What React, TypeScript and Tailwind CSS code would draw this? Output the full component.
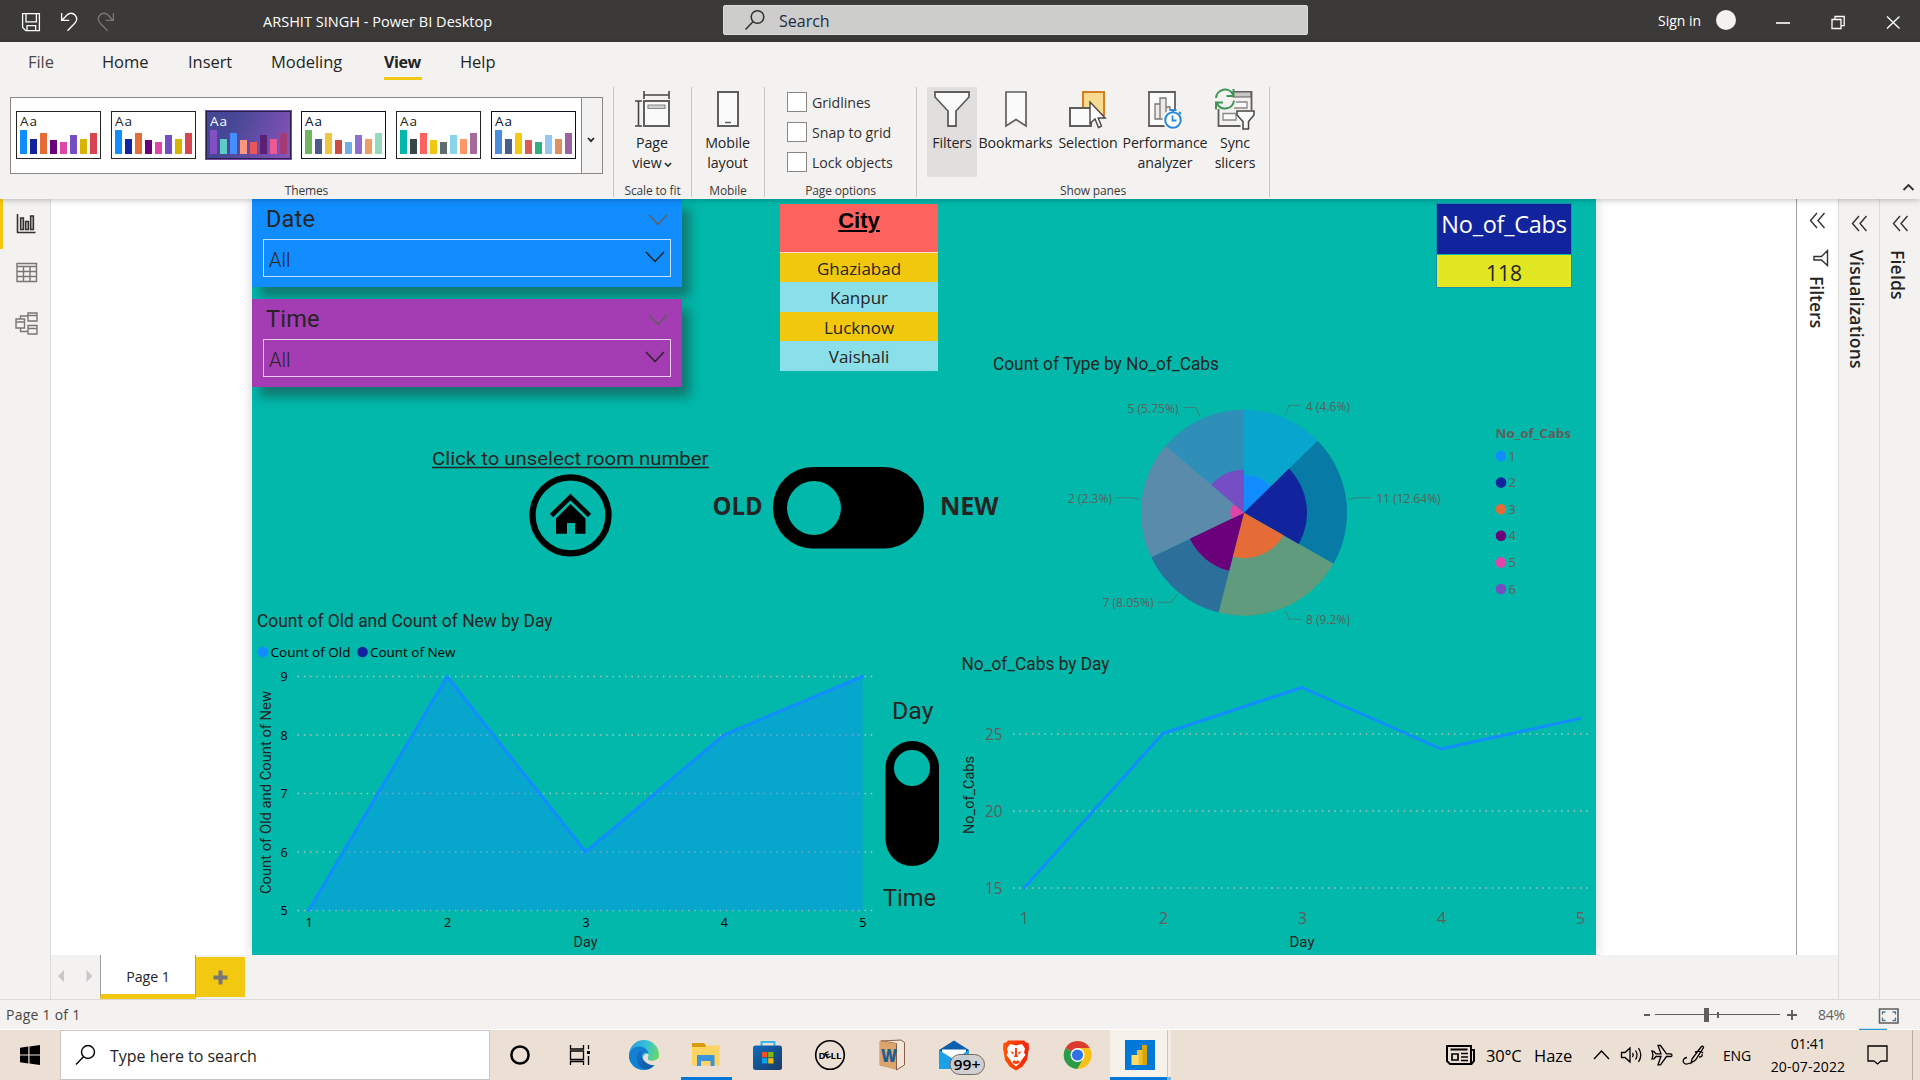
import React from "react";

type P = { children?: React.ReactNode };

/* ---------- shared data ---------- */

const themes: { colors: string[]; dark?: boolean; border: string; ink: string }[] = [
  { colors: ["#118dff", "#12239e", "#e66c37", "#6b007b", "#e044a7", "#744ec2", "#d9b300", "#d64550"], border: "border-[#252423]", ink: "text-[#252423]" },
  { colors: ["#118dff", "#12239e", "#e66c37", "#6b007b", "#e044a7", "#744ec2", "#d9b300", "#d64550"], border: "border-[#252423]", ink: "text-[#252423]" },
  { colors: ["#8250c4", "#5ecbc8", "#438fff", "#ff977e", "#eb5757", "#5b2071", "#ec5a96", "#a43b76"], dark: true, border: "border-[#252440]", ink: "text-white" },
  { colors: ["#70b55f", "#4b5a8a", "#eec643", "#cd4c46", "#71afe2", "#8d6fd1", "#ee9e64", "#95dabb"], border: "border-[#0a1128]", ink: "text-[#0a1128]" },
  { colors: ["#01b8aa", "#374649", "#fd625e", "#f2c80f", "#5f6b6d", "#8ad4eb", "#fe9666", "#a66999"], border: "border-[#252423]", ink: "text-[#252423]" },
  { colors: ["#4a8ddc", "#4c5d8a", "#f3c911", "#dc5b57", "#33ae81", "#95c8f0", "#dd915f", "#9a64a0"], border: "border-[#0a1128]", ink: "text-[#0a1128]" },
];
const barHeights = ["h-[24px]", "h-[15px]", "h-[21px]", "h-[14px]", "h-[12px]", "h-[19px]", "h-[15px]", "h-[21px]"];

/* ---------- title bar ---------- */

function TitleBar() {
  return (
    <header className="flex h-[42px] shrink-0 items-center bg-[#3b3a39] text-white">
      <svg width="240" height="42" fill="none" stroke="#fff" strokeWidth="1.3">
        <path d="M22.6 13.6h16.8v17H25.8l-3.2-3.2z M26 13.6v8.2h10.4v-8.2 M27 30.6v-5h8.6v5" />
        <path d="M61.6 13v7.4h7.6 M62 20.2l5-5.2c2.600-2.500 6-2.200 8 0c2.200 2.400 2 5.600 0 8l-7.500 7.800" />
        <g stroke="#797775">
          <path d="M113.400 13v7.400h-7.600 M113 20.200l-5-5.200c-2.600-2.500-6-2.200-8 0c-2.200 2.400-2 5.600 0 8l7.500 7.800" />
        </g>
      </svg>
      <div className="ml-[23px] w-[460px] pt-[2px] text-[14.500px] tracking-[0.020px]">ARSHIT SINGH - Power BI Desktop</div>
      <div className="mt-[-2px] flex h-[30px] w-[585px] items-center rounded-[2px] border border-[#dcdcda] bg-[#cdcdcb]">
        <svg className="ml-[20px]" width="22" height="22" fill="none" stroke="#323130" strokeWidth="1.500">
          <circle cx="13.500" cy="8" r="6.300" />
          <path d="M9.200 12.600L1.500 20.500" />
        </svg>
        <span className="ml-[13px] pt-[2px] text-[16px] text-[#1b2a4a]">Search</span>
      </div>
      <div className="ml-[350px] mt-[-2px] w-[58px] text-[14px]">Sign in</div>
      <div className="mt-[-2px] h-5 w-5 rounded-full bg-[#f3f2f1]" />
      <svg className="ml-[34px]" width="150" height="42" fill="none" stroke="#fff" strokeWidth="1.300">
        <path d="M6 23h14" strokeWidth="1.600" />
        <path d="M62 19.500h9v9h-9z M65 19.500v-3h9.200v9.200h-3.200" />
        <path d="M117 16.500l12.500 12 M129.500 16.500l-12.500 12" />
      </svg>
    </header>
  );
}

/* ---------- ribbon ---------- */

function Tabs() {
  const tab = "text-[16.500px] tracking-[-0.050px]";
  return (
    <nav className="flex h-[45px] items-start pt-[8px] text-[#252423]">
      <span className={`${tab} ml-[28px] w-[74px] text-[#4a4846]`}>File</span>
      <span className={`${tab} w-[86px]`}>Home</span>
      <span className={`${tab} w-[83px]`}>Insert</span>
      <span className={`${tab} w-[113px]`}>Modeling</span>
      <span className="mr-[38px] flex h-[30px] w-[38px] items-start border-b-[3px] border-[#f2c811] text-[16px] font-bold tracking-[-0.400px]">View</span>
      <span className={tab}>Help</span>
    </nav>
  );
}

function ThemeThumb({ t }: { t: (typeof themes)[number] }) {
  return (
    <div
      className={`flex h-[48px] w-[85px] flex-col border ${t.border} ${t.ink} ${
        t.dark ? "bg-linear-115 from-[#464895] from-30% to-[#8a52bd] ring-1 ring-[#7d4bb0]" : "bg-white"
      }`}
    >
      <span className="ml-[3px] h-[18px] text-[13.500px] leading-[18px] tracking-[1px]">Aa</span>
      <div className="ml-[3px] flex h-[24px] items-end gap-[3px]">
        {t.colors.map((c, i) => (
          <i key={i} className={`w-[7px] ${barHeights[i]}`} style={{ backgroundColor: c }} />
        ))}
      </div>
    </div>
  );
}

function Group({ label, cls, children }: P & { label: string; cls: string }) {
  return (
    <section className={`flex h-[110px] flex-col border-r border-[#c8c6c4] ${cls}`}>
      <div className="flex h-[94px] w-full">{children}</div>
      <div className="flex h-[16px] w-full items-center justify-center pt-[4px] text-[12px] leading-none tracking-[-0.150px] text-[#3b3a39]">{label}</div>
    </section>
  );
}

function Tool({ icon, lines, cls, chevron }: { icon: React.ReactNode; lines: string[]; cls: string; chevron?: boolean }) {
  return (
    <div className={`flex h-[90px] shrink-0 flex-col items-center text-[14.200px] leading-[20px] tracking-[-0.080px] text-[#252423] ${cls}`}>
      <div className="h-[46px]">{icon}</div>
      {lines.map((l, i) => (
        <span key={l} className="flex items-center whitespace-nowrap">
          {l}
          {chevron && i === 1 && (
            <svg className="ml-[2px] mt-[3px]" width="8" height="6" fill="none" stroke="#252423" strokeWidth="1.600">
              <path d="M1 1l3 3.200l3-3.200" />
            </svg>
          )}
        </span>
      ))}
    </div>
  );
}

const ico = { fill: "#fafafa", stroke: "#605e5c", strokeWidth: 2 };

const PageViewIcon = (
  <svg width="38" height="45" {...ico}>
    <path d="M11 4v8 M36 4v8 M11 8h25 M2 14h7 M2 39h7 M5.500 14v25" fill="none" stroke="#484644" strokeWidth="1.600" />
    <path d="M11 14h25v25h-25z" />
    <path d="M15 18h17v3.500h-17z" fill="#d2d0ce" strokeWidth="1.200" stroke="#8a8886" />
  </svg>
);
const MobileIcon = (
  <svg width="24" height="45" {...ico}>
    <path d="M2 5h20v34h-20z" />
    <path d="M9 35.500h6" strokeWidth="1.500" />
  </svg>
);
const FilterIcon = (
  <svg width="38" height="45" {...ico}>
    <path d="M2 5h34v5l-13 14v15h-8v-15l-13-14z" strokeWidth="1.800" />
  </svg>
);
const BookmarkIcon = (
  <svg width="24" height="45" {...ico}>
    <path d="M2 5h20v34l-10-6.500l-10 6.500z" strokeWidth="1.700" />
  </svg>
);
const SelectionIcon = (
  <svg width="40" height="45">
    <path d="M15 5h21v23h-21z" fill="#f8db8f" stroke="#d67f1f" strokeWidth="2" />
    <path d="M2 21h21v18h-21z" {...ico} />
    <path d="M22 15v21.500l5-4.500l3.500 8.500l3-1.300l-3.300-8.200h7z" fill="#fff" stroke="#484644" strokeWidth="1.400" />
  </svg>
);
const PerformanceIcon = (
  <svg width="38" height="45" {...ico}>
    <path d="M3 5h26v34h-26z" strokeWidth="1.800" />
    <path d="M9 17h5v15h-5z M14 11h6v21h-6z M20 20h4v12h-4z" strokeWidth="1.300" fill="#edebe9" stroke="#797775" />
    <circle cx="27" cy="33" r="10.500" fill="#fafafa" stroke="none" />
    <circle cx="27" cy="33" r="7.800" fill="#fff" stroke="#2b88d8" />
    <path d="M23.500 23h7 M27 23v3 M33 25l2 2 M26.500 28.500v5h4" stroke="#2b88d8" strokeWidth="1.800" fill="none" />
  </svg>
);
const SyncIcon = (
  <svg width="42" height="45" {...ico}>
    <path d="M4.500 22v17h22 M20 5h17.500v18" strokeWidth="1.800" fill="none" />
    <path d="M19 5h18v5h-18z" fill="#c8c6c4" strokeWidth="1.200" />
    <path d="M22 15h11v6h-13 M9 26.500h13v6.500h-13z" strokeWidth="1.300" stroke="#8a8886" />
    <path d="M23 24h17v4l-5.500 6.500v7.500h-5.500v-7.500l-6-6.500z" strokeWidth="1.500" stroke="#484644" />
    <path d="M2 11a9 9 0 0 1 17-3.500 M19.500 2v7h-7 M20 13.500a9 9 0 0 1-17 3 M2 22.500v-7h7" fill="none" stroke="#3f9454" />
  </svg>
);

function Ribbon() {
  return (
    <div className="flex h-[112px]">
      <Group label="Themes" cls="w-[614px]">
        <div className="ml-[10px] mt-[10px] flex h-[77px] w-[593px] border border-[#8a8886] bg-white">
          <div className="flex w-[570px] shrink-0 items-start gap-[10px] pl-[5px] pt-[13px]">
            {themes.map((t, i) => (
              <ThemeThumb key={i} t={t} />
            ))}
          </div>
          <div className="flex w-[21px] shrink-0 items-center justify-center border-l border-[#8a8886] bg-[#f3f2f1] pr-[2px] pt-[8px]">
            <svg width="8" height="6" fill="none" stroke="#252423" strokeWidth="1.700">
              <path d="M1 1l3 3.200l3-3.200" />
            </svg>
          </div>
        </div>
      </Group>
      <Group label="Scale to fit" cls="w-[78px]">
        <Tool icon={PageViewIcon} lines={["Page", "view"]} chevron cls="w-[76px]" />
      </Group>
      <Group label="Mobile" cls="w-[73px]">
        <Tool icon={MobileIcon} lines={["Mobile", "layout"]} cls="w-[71px]" />
      </Group>
      <Group label="Page options" cls="w-[152px]">
        <div className="ml-[22px] mt-[5px] flex flex-col gap-[10px]">
          {["Gridlines", "Snap to grid", "Lock objects"].map((s) => (
            <label key={s} className="flex h-5 items-center gap-[5px] text-[14.200px] leading-none tracking-[-0.050px] text-[#323130]">
              <i className="h-5 w-5 border border-[#8a8886] bg-white" />
              <span className="pt-[2px]">{s}</span>
            </label>
          ))}
        </div>
      </Group>
      <Group label="Show panes" cls="w-[353px]">
        <Tool icon={FilterIcon} lines={["Filters"]} cls="ml-[10px] w-[50px] bg-[#e1dfdd]" />
        <Tool icon={BookmarkIcon} lines={["Bookmarks"]} cls="w-[77px]" />
        <Tool icon={SelectionIcon} lines={["Selection"]} cls="ml-[2px] w-[64px]" />
        <Tool icon={PerformanceIcon} lines={["Performance", "analyzer"]} cls="ml-[2px] w-[86px]" />
        <Tool icon={SyncIcon} lines={["Sync", "slicers"]} cls="ml-[4px] w-[46px]" />
      </Group>
      <div className="flex flex-1 items-end justify-end pb-[7px] pr-[5px]">
        <svg width="13" height="9" fill="none" stroke="#323130" strokeWidth="1.900">
          <path d="M1.500 7l5-5l5 5" />
        </svg>
      </div>
    </div>
  );
}

/* ---------- side rails ---------- */

function LeftRail() {
  return (
    <aside className="h-full w-[51px] shrink-0 border-r border-[#dcdad8] bg-[#f3f2f1]">
      <div className="h-[50px] border-l-[3px] border-[#f2c811] pl-[13px] pt-[14px]">
        <svg width="22" height="22" fill="#a19f9d" stroke="#323130" strokeWidth="1.300">
          <path d="M1.500 1v18.500h18" fill="none" strokeWidth="1.600" />
          <path d="M4.500 5h3v11.500h-3z M9.500 8.500h3v8h-3z M14.500 3h3v13.500h-3z" />
        </svg>
      </div>
      <div className="h-[50px] pl-[16px] pt-[13px]">
        <svg width="22" height="22" fill="none" stroke="#797775" strokeWidth="1.400">
          <path d="M1 1.500h19.500v18h-19.500z M1 4.500h19.500 M1 9.500h19.500 M1 14.500h19.500 M7.500 4.500v15 M14 4.500v15" />
        </svg>
      </div>
      <div className="h-[50px] pl-[15px] pt-[13px]">
        <svg width="24" height="24" fill="none" stroke="#797775" strokeWidth="1.400">
          <path d="M13 1h9v8h-9z M13 3.500h9 M1 7h8.500v9h-8.500z M1 10h8.500 M13 13.500h9v8.500h-9z M13 16.500h9 M5.500 7v-3h7.500 M5.500 16v3.500h7.500" />
        </svg>
      </div>
    </aside>
  );
}

const Chevrons = () => (
  <svg className="shrink-0" width="17" height="17" fill="none" stroke="#323130" strokeWidth="1.400">
    <path d="M8 1l-6.500 7.500l6.500 7.500 M15.500 1l-6.500 7.500l6.500 7.500" />
  </svg>
);
const vert = "[writing-mode:vertical-rl] text-[17.500px] leading-[20px] font-semibold text-[#252423]";

function RightPanes() {
  return (
    <>
      <aside className="flex h-[756px] w-[42px] flex-col items-center border-l border-[#a19f9d] bg-white pt-[13px]">
        <Chevrons />
        <svg className="ml-[5px] mt-[20px] shrink-0" width="17" height="18" fill="none" stroke="#323130" strokeWidth="1.400">
          <path d="M15.500 1.500v15l-6-5.500h-7.500v-3.500h7.500z" />
        </svg>
        <span className={`${vert} mt-[9px] mr-[2px]`}>Filters</span>
      </aside>
      <aside className="flex h-[800px] w-[41px] flex-col items-center border-l border-[#dcdad8] bg-[#f3f2f1] pt-[16px]">
        <Chevrons />
        <span className={`${vert} mt-[18px] mr-[5px] tracking-[0.200px]`}>Visualizations</span>
      </aside>
      <aside className="flex h-[800px] w-[41px] flex-col items-center border-l border-[#dcdad8] bg-[#f3f2f1] pt-[16px]">
        <Chevrons />
        <span className={`${vert} mt-[18px] mr-[5px] tracking-[0.200px]`}>Fields</span>
      </aside>
    </>
  );
}

/* ---------- report visuals ---------- */

const din = "font-['Roboto','Open_Sans',sans-serif]";

function Slicer({ title, cls }: { title: string; cls: string }) {
  return (
    <div className={`absolute left-0 h-[88px] w-[430px] shadow-[8px_10px_10px_rgba(37,36,35,0.42)] ${cls} ${din}`}>
      <div className="flex h-[40px] items-center justify-between pl-[14px] pr-[14px] pt-px">
        <span className="text-[23.500px] tracking-[0.200px] text-[#252423]">{title}</span>
        <svg width="20" height="12" fill="none" stroke="#605e5c" strokeWidth="1.500">
          <path d="M1 1l9 9.500l9-9.500" />
        </svg>
      </div>
      <div className="ml-[11px] flex h-[38px] w-[408px] items-center justify-between border border-white/75 pl-[5px] pr-[5px]">
        <span className="pt-[4px] text-[20px] font-light text-[#252423]">All</span>
        <svg className="mt-[-2px]" width="20" height="12" fill="none" stroke="#252423" strokeWidth="1.500">
          <path d="M1 1l9 9.500l9-9.500" />
        </svg>
      </div>
    </div>
  );
}

function CityTable() {
  return (
    <div className="absolute left-[528px] top-[5px] flex w-[158px] flex-col text-center text-[17px] text-[#252423]">
      <div className="h-[49px] border-b border-[#ffe0d0] bg-[#fd625e] pt-[3px] font-['Liberation_Sans',sans-serif] text-[22px] leading-[27px] font-bold text-black underline decoration-[1.500px] underline-offset-[2px]">City</div>
      <div className="h-[29px] bg-[#f2c80f] leading-[31px]">Ghaziabad</div>
      <div className="h-[30px] bg-[#8adfe9] leading-[32px]">Kanpur</div>
      <div className="h-[29px] bg-[#f2c80f] leading-[31px]">Lucknow</div>
      <div className="h-[30px] bg-[#8adfe9] leading-[32px]">Vaishali</div>
    </div>
  );
}

function CabsTable() {
  return (
    <div className="absolute left-[1184px] top-[4px] w-[136px] border border-[#1a8fae] text-center">
      <div className="flex h-[50px] justify-center bg-[#12239e] text-[23.500px] leading-[40px] tracking-[-0.250px] text-white">No_of_Cabs</div>
      <div className="mt-px h-[32px] bg-[#e1e722] text-[21px] leading-[36px] text-[#252423]">118</div>
    </div>
  );
}

type TxtProps = { x: number; y: number; w?: number; size: number; fill?: string; anchor?: "start" | "middle" | "end"; cls?: string; t: string; up?: boolean };
function Txt({ x, y, w, size, fill = "#252423", anchor = "start", cls = "", t, up }: TxtProps) {
  return (
    <text x={x} y={y} fontSize={size} fill={fill} textAnchor={anchor} className={cls} textLength={w} lengthAdjust={w ? "spacingAndGlyphs" : undefined} transform={up ? `rotate(-90 ${x} ${y})` : undefined}>
      {t}
    </text>
  );
}

function Dots({ ys, x1, x2 }: { ys: number[]; x1: number; x2: number }) {
  return (
    <>
      {ys.map((y) => (
        <path key={y} d={`M${x1} ${y}H${x2}`} stroke="#c8c6c4" strokeOpacity="0.850" strokeWidth="1.300" strokeDasharray="1.500 4.800" />
      ))}
    </>
  );
}

const CX = 1244;
const CY = 512.7;
const slices = [
  { a: 0, b: 45.6, r: 37.7, inner: "#118dff", outer: "#08a6cf" },
  { a: 45.6, b: 119.7, r: 63, inner: "#12239e", outer: "#077ba5" },
  { a: 119.7, b: 194.3, r: 45.5, inner: "#e66c37", outer: "#5f9b7c" },
  { a: 194.3, b: 244.3, r: 60, inner: "#6b007b", outer: "#2c6f9a" },
  { a: 244.3, b: 310.5, r: 13.5, inner: "#e044a7", outer: "#5b8bab" },
  { a: 310.5, b: 360, r: 43, inner: "#744ec2", outer: "#2f8fb8" },
];
function wedge(a: number, b: number, r: number) {
  const p = (d: number) => {
    const t = (d * Math.PI) / 180;
    return `${(CX + r * Math.sin(t)).toFixed(2)} ${(CY - r * Math.cos(t)).toFixed(2)}`;
  };
  return `M${CX} ${CY}L${p(a)}A${r} ${r} 0 0 1 ${p(b)}Z`;
}

function Donut() {
  const g = "#605e5c";
  const labels: [string, number, number, number][] = [
    ["4 (4.6%)", 1306, 410.5, 44],
    ["11 (12.64%)", 1376.5, 502.500, 64],
    ["8 (9.2%)", 1306, 623.500, 44],
    ["7 (8.05%)", 1102.500, 606.500, 51],
    ["2 (2.3%)", 1068, 502.500, 44],
    ["5 (5.75%)", 1127.500, 412.500, 51],
  ];
  const leg = ["#118dff", "#12239e", "#e66c37", "#6b007b", "#e044a7", "#744ec2"];
  return (
    <svg className="absolute left-[728px] top-[146px]" width="616" height="290" viewBox="980 345 616 290">
      <Txt t="Count of Type by No_of_Cabs" x={993} y={370} w={226} size={17.500} cls={din} />
      {slices.map((s) => (
        <path key={s.a} d={wedge(s.a, s.b, 103)} fill={s.outer} />
      ))}
      {slices.map((s) => (
        <path key={s.a} d={wedge(s.a, s.b, s.r)} fill={s.inner} />
      ))}
      <path
        d="M1285 415L1289 405.500H1301 M1200 416.500L1196 407.500H1183 M1349 499.300L1358 497.700H1371 M1139 499.300L1130 497.700H1116.500 M1177.500 594L1171 602.300H1158 M1285 610L1289 619.300H1301"
        fill="none"
        stroke={g}
        strokeOpacity="0.600"
      />
      {labels.map(([t, x, y, w]) => (
        <Txt key={t} t={t} x={x} y={y} w={w} size={12.500} fill={g} />
      ))}
      <Txt t="No_of_Cabs" x={1495.500} y={437.500} w={75.500} size={13} fill={g} cls="font-bold" />
      {leg.map((c, i) => (
        <g key={c}>
          <circle cx="1501" cy={456 + i * 26.600} r="5.300" fill={c} />
          <Txt t={String(i + 1)} x={1508.500} y={460.500 + i * 26.600} size={12.700} fill={g} />
        </g>
      ))}
    </svg>
  );
}

function AreaChart() {
  const ys = [676.5, 735, 793.5, 852, 910.5];
  const xs = [308.600, 447.200, 585.700, 724, 862.500];
  const line = "308.600 910.500 447.200 676.500 585.700 852 724 735 862.500 676.500";
  return (
    <svg className="absolute left-0 top-[406px]" width="624" height="350" viewBox="252 605 624 350">
      <Txt t="Count of Old and Count of New by Day" x={257} y={627} w={295.500} size={17.500} cls={din} />
      <circle cx="263" cy="652" r="5.300" fill="#118dff" />
      <Txt t="Count of Old" x={270.500} y={657} w={80} size={13.500} fill="#000" />
      <circle cx="362.500" cy="652" r="5.300" fill="#12239e" />
      <Txt t="Count of New" x={370} y={657} w={85.500} size={13.500} fill="#000" />
      <Dots ys={ys} x1={297.500} x2={874} />
      <polygon points={`${line} 862.500 910.500`} fill="#118dff" fillOpacity="0.400" />
      <polyline points={line} fill="none" stroke="#118dff" strokeWidth="3" strokeLinejoin="round" strokeLinecap="round" />
      {ys.map((y, i) => (
        <Txt key={y} t={String(9 - i)} x={284} y={y + 4.500} size={12.500} fill="#000" anchor="middle" />
      ))}
      {xs.map((x, i) => (
        <Txt key={x} t={String(i + 1)} x={x + 0.4} y={927} size={12.500} fill="#000" anchor="middle" />
      ))}
      <Txt t="Day" x={573.500} y={946.500} w={24} size={15} cls={din} />
      <Txt t="Count of Old and Count of New" x={271} y={894} w={203} size={14.500} cls={din} up />
    </svg>
  );
}

function LineChart() {
  const ys = [734, 811, 888];
  const xs = [1024, 1163, 1302, 1441, 1580];
  return (
    <svg className="absolute left-[704px] top-[446px]" width="640" height="310" viewBox="956 645 640 310">
      <Txt t="No_of_Cabs by Day" x={961.500} y={670} w={148} size={17.500} cls={din} />
      <Dots ys={ys} x1={1013} x2={1589} />
      <polyline points="1024 888 1163 733.500 1302 687.500 1441 749 1580 718.500" fill="none" stroke="#118dff" strokeWidth="3" strokeLinejoin="round" strokeLinecap="round" />
      {ys.map((y, i) => (
        <Txt key={y} t={String(25 - i * 5)} x={985} y={y + 6} w={17.500} size={16.500} fill="#605e5c" />
      ))}
      {xs.map((x, i) => (
        <Txt key={x} t={String(i + 1)} x={x + 0.4} y={924} size={16.500} fill="#605e5c" anchor="middle" />
      ))}
      <Txt t="Day" x={1289.500} y={946.500} w={25} size={15} cls={din} />
      <Txt t="No_of_Cabs" x={974} y={834} w={78} size={14.500} cls={din} up />
    </svg>
  );
}

function Controls() {
  return (
    <>
      <svg className="absolute left-[170px] top-[241px]" width="590" height="120" viewBox="422 440 590 120">
        <Txt t="Click to unselect room number" x={432} y={464.500} w={276.500} size={19} cls={din} />
        <path d="M432 467.500h277" stroke="#252423" strokeWidth="1.400" />
        <circle cx="570.500" cy="515.300" r="38" fill="none" stroke="#000" strokeWidth="6.300" />
        <path d="M551.500 515.500L570.500 497L589.500 515.500" fill="none" stroke="#000" strokeWidth="4.600" />
        <path d="M556 518.500L570.500 504L585.500 518.500V533.700H575V523H567V533.700H556Z" />
        <Txt t="OLD" x={712.500} y={515} w={50} size={25} cls="font-bold" />
        <rect x="773" y="467" width="151" height="81.500" rx="40" />
        <circle cx="814" cy="508" r="27" fill="#01b8aa" />
        <Txt t="NEW" x={940} y={515} w={58.500} size={25} cls="font-bold" />
      </svg>
      <svg className="absolute left-[624px] top-[491px]" width="70" height="230" viewBox="876 690 70 230">
        <Txt t="Day" x={892} y={719} w={41.500} size={24.500} cls={din} />
        <rect x="885.500" y="741" width="53.500" height="125" rx="26.700" />
        <circle cx="912" cy="768" r="18" fill="#01b8aa" />
        <Txt t="Time" x={883} y={906} w={53} size={24.500} cls={din} />
      </svg>
    </>
  );
}

function Report() {
  return (
    <div className="relative h-[756px] w-[1344px] shrink-0 overflow-hidden bg-[#01b8aa]">
      <CityTable />
      <CabsTable />
      <Slicer title="Date" cls="top-0 bg-[#118dff]" />
      <Slicer title="Time" cls="top-[100px] bg-[#a43cb3]" />
      <Donut />
      <AreaChart />
      <LineChart />
      <Controls />
    </div>
  );
}

/* ---------- bottom bars ---------- */

function PageTabs() {
  return (
    <div className="flex h-[44px] w-full bg-[#f3f2f1]">
      <svg width="49" height="44" fill="#c8c6c8">
        <path d="M13 15v12l-6-6z M35.500 15v12l6-6z" />
      </svg>
      <div className="flex w-[96px] items-center justify-center border-x border-b-[5px] border-x-[#a19f9d] border-b-[#f2c811] bg-white pt-[5px] text-[14.200px] tracking-[-0.050px] text-[#252423]">Page 1</div>
      <div className="mt-[2px] flex h-[40px] w-[49px] items-center justify-center bg-[#f2c811]">
        <svg width="15" height="15" stroke="#797775" strokeWidth="4">
          <path d="M7.500 0.500v14 M0.500 7.500h14" />
        </svg>
      </div>
    </div>
  );
}

function StatusBar() {
  return (
    <div className="flex h-[31px] shrink-0 items-center border-t border-b border-t-[#dcdad8] border-b-white bg-[#f3f2f1] text-[14px] text-[#484644]">
      <span className="ml-[6px] w-[1634px] tracking-[0.250px]">Page 1 of 1</span>
      <svg width="165" height="30" stroke="#605e5c" fill="none">
        <path d="M4 15h6 M147 15h10 M152 10v10" strokeWidth="1.900" />
        <path d="M15 14.500h125" strokeWidth="1.200" />
        <path d="M66.500 8v14" strokeWidth="5" />
        <path d="M78 12v6" strokeWidth="2" />
      </svg>
      <span className="ml-[13px] w-[41px] pb-px text-[14px] tracking-[-0.200px] text-[#605e5c]">84%</span>
      <svg width="48" height="30" fill="none">
        <path d="M20.500 9h18.500v14h-18.500z" stroke="#605e5c" strokeWidth="1.600" />
        <path d="M23.500 14.500v-2.500h3 M33.500 12h3v2.500 M36.500 17.500v3h-3 M26.500 20.500h-3v-3" stroke="#4f7590" strokeWidth="1.300" />
        <path d="M0 29.500h28" stroke="#2b9bd8" strokeWidth="1.500" />
      </svg>
    </div>
  );
}

function TaskIcons() {
  return (
    <svg className="shrink-0" width="750" height="50" viewBox="490 1030 750 50">
      <defs>
        <linearGradient id="edgeTop" x1="0" y1="0.300" x2="1" y2="0.600">
          <stop offset="0" stopColor="#2a9fe0" />
          <stop offset="0.500" stopColor="#35c1d8" />
          <stop offset="1" stopColor="#6fdc5a" />
        </linearGradient>
        <linearGradient id="edgeLow" x1="0" y1="0" x2="0.800" y2="1">
          <stop offset="0" stopColor="#1b6fc4" />
          <stop offset="1" stopColor="#0c5aa8" />
        </linearGradient>
        <linearGradient id="store" x1="0" y1="0" x2="1" y2="1">
          <stop offset="0" stopColor="#0b6cc0" />
          <stop offset="1" stopColor="#1d3a66" />
        </linearGradient>
        <linearGradient id="brave" x1="0" y1="0" x2="1" y2="0">
          <stop offset="0" stopColor="#ff5500" />
          <stop offset="1" stopColor="#f4220c" />
        </linearGradient>
      </defs>
      {/* Cortana and task view */}
      <circle cx="520" cy="1055" r="8.600" fill="none" stroke="#000" strokeWidth="2.500" />
      <path d="M570.500 1045v4h13v-4 M570.500 1051h13v8.500h-13z M570.500 1065v-3.500h13v3.500 M588.500 1045v4 M588.500 1056v9" fill="none" stroke="#000" strokeWidth="1.300" />
      <path d="M587 1051h3v3h-3z" />
      {/* Edge */}
      <circle cx="644" cy="1055" r="15" fill="url(#edgeTop)" />
      <path d="M629 1055c1-6 6-9 11-8.500c5 0.500 8 3.500 8.500 7c-2-1.500-5.500-1-6.500 2.500c-1 5 5 9 13.500 7.500c-3 4.500-7 6.500-11.500 6.500c-8 0-15.500-6-15-15z" fill="#1280d2" />
      <path d="M637 1056c1-4 5-6.500 8.500-5.500c-3 0.500-4.500 3-3.500 6.500c1.500 4.500 7 8 13.500 6.500c-3 4-6.500 5.500-9 5.500c-6 0-10.500-6-9.500-13z" fill="url(#edgeLow)" />
      <path d="M645 1054.500c1.500-1.500 4-1 3.500 1.500c-0.500 2-1 2.500 0 4c3 1.500 7.500 1 10.500-2.500l0.500 4.500l-4 3c-7 1-11.500-3.500-12.500-6.500c-0.300-1.500 0.500-3 2-4z" fill="#ecdfd4" />
      {/* File Explorer */}
      <path d="M692 1043h12l2 2.500v3h-14z" fill="#d99b0c" />
      <path d="M692 1047h13l2-1.500h12.500v20h-27.500z" fill="#fdd361" />
      <path d="M697 1066v-11h17.500v11h-4v-5h-9.500v5z" fill="#3c93dc" />
      <path d="M681 1077h51v3h-51z" fill="#0078d7" />
      {/* Microsoft Store */}
      <path d="M761.500 1047v-5h13v5" fill="none" stroke="#35b8ee" strokeWidth="2" />
      <rect x="753" y="1045.500" width="29" height="24.500" rx="2.500" fill="url(#store)" />
      <path d="M762 1052h5.300v5.300h-5.300z" fill="#f25022" />
      <path d="M768.200 1052h5.300v5.300h-5.300z" fill="#7fba00" />
      <path d="M762 1058.200h5.300v5.300h-5.300z" fill="#00a4ef" />
      <path d="M768.200 1058.200h5.300v5.300h-5.300z" fill="#ffb900" />
      {/* Dell */}
      <circle cx="830" cy="1055" r="14.300" fill="none" stroke="#000" strokeWidth="1.600" />
      <text x="818.500" y="1058.500" fontSize="9.500" fontWeight="700" textLength="7" lengthAdjust="spacingAndGlyphs">D</text>
      <text x="824.500" y="1058" fontSize="9" fontWeight="700" textLength="6" lengthAdjust="spacingAndGlyphs" transform="rotate(-28 828 1055)">E</text>
      <text x="830.500" y="1058.500" fontSize="9.500" fontWeight="700" textLength="11" lengthAdjust="spacingAndGlyphs">LL</text>
      {/* WordWeb */}
      <path d="M880 1041l16 2.500v25.500l-16-4z" fill="#d9a066" stroke="#b07f4a" strokeWidth="0.800" />
      <path d="M881 1041l20-1l3.500 2.500v22.500l-8 5v-26.500z" fill="#f1e6d8" stroke="#8c5b48" strokeWidth="1" />
      <path d="M880 1041l16 2.500v26l-16-4.500z" fill="#dca46c" />
      <text x="881" y="1061.500" fontSize="17" fontWeight="800" fill="#1c5f94" textLength="16" lengthAdjust="spacingAndGlyphs">W</text>
      {/* Mail */}
      <path d="M939 1050l15-9.500l15 9.500v8h-30z" fill="#0b5fae" />
      <path d="M942 1049.500h24v10h-24z" fill="#fff" />
      <path d="M939 1050l15 9.500l15-9.500v19h-30z" fill="#1ba1e8" />
      <rect x="950" y="1054.500" width="34.500" height="20" rx="10" fill="#cfcfcf" fillOpacity="0.930" stroke="#6b6b6b" />
      <text x="953.500" y="1070" fontSize="14.500" fontWeight="600" textLength="27" lengthAdjust="spacingAndGlyphs">99+</text>
      {/* Brave */}
      <path d="M1008 1040.500h16l2 2l2.500 0.500l0.500 5l-2 12l-4.500 6.500l-6.500 4l-6.500-4l-4.500-6.500l-2-12l0.500-5l2.500-0.500z" fill="url(#brave)" />
      <path d="M1010 1044l6 1.500l6-1.500l3 4.500l-1 4l1.500 2.500l-4 5l-1.500 3l-4 3.500l-4-3.500l-1.500-3l-4-5l1.500-2.500l-1-4z" fill="#fff" />
      <path d="M1010 1051l4 1.500l-1 2z M1022 1051l-4 1.500l1 2z M1014 1060l2 1.500l2-1.500l2 3l-4 1l-4-1z M1015 1048h2v6l1 3h-4l1-3z" fill="#fb3c0e" />
      {/* Chrome */}
      <path d="M1077.500 1055L1065.500 1048A14 14 0 0 1 1089.800 1048Z" fill="#db3b2e" />
      <path d="M1077.500 1055L1077.500 1069A14 14 0 0 1 1065.500 1048Z" fill="#2a9c48" />
      <path d="M1071.500 1058.500l6 10.500l6-10.500z" fill="#2a9c48" />
      <path d="M1083.500 1058.500l-6 10.500a14 14 0 0 0 12.300-21h-12.300z" fill="#fbc116" />
      <circle cx="1077.500" cy="1055" r="7" fill="#fff" />
      <circle cx="1077.500" cy="1055" r="5.600" fill="#3072e8" />
      {/* Power BI */}
      <path d="M1110 1030h57v47h-57z" fill="#f7f1ec" />
      <path d="M1167 1030h1v47h-1z" fill="#cfc4ba" />
      <path d="M1168 1030h3v47h-3z" fill="#f3ebe4" />
      <path d="M1110 1077h57v3h-57z" fill="#0078d7" />
      <path d="M1167 1077h4v3h-4z" fill="#7db4e0" />
      <path d="M1125 1040h30v30h-30z" fill="#0078d7" />
      <path d="M1142 1045h5v20h-5z" fill="#d9a406" />
      <path d="M1137 1050h5.500v15h-5.500z" fill="#eec22d" />
      <path d="M1131.500 1055h7v10h-7z" fill="#fbdc6c" />
    </svg>
  );
}

function Taskbar() {
  return (
    <footer className="flex h-[50px] shrink-0 items-center bg-[#ecdfd4] text-black">
      <svg className="ml-[20px] shrink-0" width="20" height="20">
        <path d="M0 2.800L8.300 1.600V9.500H0z M9.500 1.400L20 0V9.500H9.500z M0 10.600H8.300V18.500L0 17.300z M9.500 10.600H20V20L9.500 18.600z" />
      </svg>
      <div className="ml-[20px] flex h-[50px] w-[430px] shrink-0 items-center border border-[#c8c6c4] bg-white">
        <svg className="ml-[14px]" width="22" height="22" fill="none" stroke="#000" strokeWidth="1.400">
          <circle cx="13" cy="8" r="6.500" />
          <path d="M8.500 12.800L1 20.500" />
        </svg>
        <span className="ml-[13px] pt-px text-[16px] tracking-[-0.020px] text-[#252423]">Type here to search</span>
      </div>
      <TaskIcons />
      <svg className="ml-[206px] shrink-0" width="29" height="20" fill="none" stroke="#000" strokeWidth="2">
        <path d="M1 1h24v18h-21l-3-3z M25 5h3v11l-2.500 3h-4 M4.500 4.500h17" />
        <path d="M6 9h6v6h-6z M15 8.500h7 M15 12h7 M15 15.500h7" strokeWidth="1.700" />
      </svg>
      <span className="ml-[11px] mt-[3px] w-[48px] shrink-0 text-[16.500px] tracking-[-0.200px]">30°C</span>
      <span className="mt-[3px] w-[49px] shrink-0 text-[16.500px]">Haze</span>
      <svg className="ml-[10px] shrink-0" width="124" height="24" fill="none" stroke="#000" strokeWidth="1.300">
        <path d="M1 16l7.500-8l7.500 8" />
        <path d="M28.500 9.500h3.500l5-4.500v14l-5-4.500h-3.500z M39.500 10q1.500 2 0 4 M42.500 7.500q3 4.500 0 9 M45.500 5q4.500 7 0 14" />
        <path d="M59 8l2 0.500l2 2.300h5l-3-8.300h2.500l6 8.300h4c2 0 2 2.700 0 2.700h-4l-6 8.300h-2.500l3-8.300h-5l-2 2.300l-2 0.200l1-4z" />
        <path d="M99 16l9-12q2-2 2.500 0.500l-8 12.500l-4.500 3z M102 9q6-1.500 8 1 M97 20c-8 4-9-5-3-5.500 M106 14q4 0 3-3" />
      </svg>
      <span className="ml-[6px] w-[40px] shrink-0 text-[14px] tracking-[-0.200px]">ENG</span>
      <div className="flex w-[90px] shrink-0 flex-col items-center text-[14px] leading-[23px]">
        <span className="tracking-[-0.200px]">01:41</span>
        <span className="tracking-[0.150px]">20-07-2022</span>
      </div>
      <svg className="ml-[14px] shrink-0" width="22" height="22" fill="none" stroke="#000" strokeWidth="1.300">
        <path d="M1 2h19v15h-6l-3.500 3l-3.500-3h-6z" />
      </svg>
      <i className="ml-[23px] h-[50px] w-px bg-[#b5aba3]" />
    </footer>
  );
}

export default function App() {
  return (
    <div className="flex h-[1080px] w-[1920px] flex-col overflow-hidden bg-[#f3f2f1] font-['Open_Sans','Noto_Sans',sans-serif] whitespace-nowrap">
      <TitleBar />
      <div className="z-10 h-[157px] shrink-0 bg-[#f3f2f1] shadow-[0_1px_6px_rgba(0,0,0,0.250)]">
        <Tabs />
        <Ribbon />
      </div>
      <main className="flex h-[800px] shrink-0">
        <LeftRail />
        <div className="flex w-[1745px] shrink-0 flex-col">
          <div className="flex h-[756px] overflow-hidden bg-white pl-[201px]">
            <div className="shadow-[0_0_12px_rgba(0,0,0,0.180)]">
              <Report />
            </div>
          </div>
          <PageTabs />
        </div>
        <RightPanes />
      </main>
      <StatusBar />
      <Taskbar />
    </div>
  );
}
